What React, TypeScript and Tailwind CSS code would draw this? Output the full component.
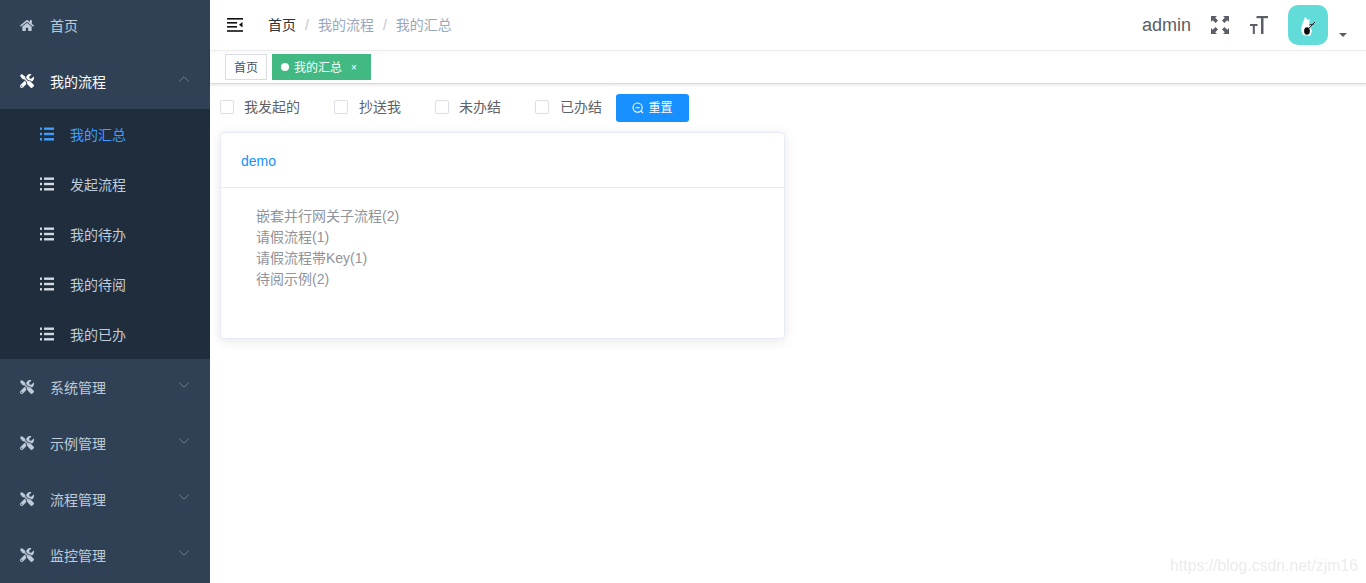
import React from "react";
import { FaHome, FaTools } from "react-icons/fa";
import { FiChevronDown, FiChevronUp } from "react-icons/fi";

const font = { fontFamily: '"Liberation Sans", "Noto Sans CJK SC", sans-serif' };

function ListIcon({ color }: { color: string }) {
  return (
    <svg width="14" height="14" viewBox="0 0 14 14" fill={color}>
      <rect x="0" y="0.5" width="2" height="2.4" />
      <rect x="4" y="0.5" width="10" height="2.4" />
      <rect x="0" y="5.8" width="2" height="2.4" />
      <rect x="4" y="5.8" width="10" height="2.4" />
      <rect x="0" y="11.1" width="2" height="2.4" />
      <rect x="4" y="11.1" width="10" height="2.4" />
    </svg>
  );
}

function TopItem({ label, open, active, home }: { label: string; open?: boolean; active?: boolean; home?: boolean }) {
  const Chevron = open ? FiChevronUp : FiChevronDown;
  return (
    <div className={`h-14 shrink-0 flex items-center pl-5 pr-[17px] text-sm ${active ? "text-white" : "text-[#bfcbd9]"}`}>
      <span className="w-[14px] flex justify-center">
        {home ? <FaHome size={15} /> : <FaTools size={14} />}
      </span>
      <span className="ml-4 pt-[2px]">{label}</span>
      {!home && <Chevron size={18} strokeWidth={1.3} className="ml-auto mb-1 text-[#75808d]" />}
    </div>
  );
}

function SubItem({ label, active }: { label: string; active?: boolean }) {
  return (
    <div className={`h-[50px] flex items-center pl-10 text-sm ${active ? "text-[#409eff]" : "text-[#bfcbd9]"}`}>
      <ListIcon color={active ? "#409eff" : "#d3dae3"} />
      <span className="ml-4 pt-[2px]">{label}</span>
    </div>
  );
}

function Sidebar() {
  return (
    <aside className="w-[210px] shrink-0 h-full bg-[#304156] overflow-hidden">
      <div className="-mt-[3px]">
        <TopItem label="首页" home />
        <TopItem label="我的流程" open active />
        <div className="bg-[#1f2d3d]">
          <SubItem label="我的汇总" active />
          <SubItem label="发起流程" />
          <SubItem label="我的待办" />
          <SubItem label="我的待阅" />
          <SubItem label="我的已办" />
        </div>
        <TopItem label="系统管理" />
        <TopItem label="示例管理" />
        <TopItem label="流程管理" />
        <TopItem label="监控管理" />
      </div>
    </aside>
  );
}

function Hamburger() {
  return (
    <svg width="16" height="14" viewBox="0 0 16 14" fill="#111">
      <rect x="0" y="0" width="16" height="1.6" />
      <rect x="0" y="4" width="10" height="1.6" />
      <rect x="0" y="8" width="10" height="1.6" />
      <rect x="0" y="12.2" width="16" height="1.6" />
      <path d="M15.5 4 L12 6.8 L15.5 9.6 Z" />
    </svg>
  );
}

function FullScreen() {
  return (
    <svg width="18" height="18" viewBox="0 0 18 18" fill="#5a5e66">
      <path d="M0 0h6L4.2 1.8 7 4.6 4.6 7 1.8 4.2 0 6z" />
      <path d="M18 0h-6l1.8 1.8L11 4.6 13.4 7l2.8-2.8L18 6z" />
      <path d="M0 18h6l-1.8-1.8L7 13.4 4.6 11l-2.8 2.8L0 12z" />
      <path d="M18 18h-6l1.8-1.8L11 13.4l2.4-2.4 2.8 2.8L18 12z" />
    </svg>
  );
}

function SizeIcon() {
  return (
    <svg width="18" height="18" viewBox="0 0 18 18" fill="#5a5e66">
      <rect x="6.5" y="0" width="11.5" height="2.2" />
      <rect x="11" y="0" width="2.5" height="18" />
      <rect x="0" y="8" width="7.5" height="2" />
      <rect x="2.8" y="8" width="2" height="10" />
    </svg>
  );
}

function Avatar() {
  return (
    <div className="w-10 h-10 rounded-[10px] bg-[#62dcd8] flex">
      <svg width="40" height="40" viewBox="0 0 40 40">
        <path d="M17 12 L20 15 L22 14 L21 18 L23 20 L22 22 L24 26 L22 31 L15 30 L13 25 L14 20 Z" fill="#fff" />
        <ellipse cx="19" cy="26" rx="2.9" ry="3.8" fill="#0b0b0b" />
        <path d="M21 20 L26 19" stroke="#222" strokeWidth="0.9" />
        <path d="M21 23 L27 17" stroke="#222" strokeWidth="1" />
      </svg>
    </div>
  );
}

function Navbar() {
  return (
    <header className="h-[51px] shrink-0 flex items-center border-b border-[#f2f2f2] shadow-[0_1px_4px_rgba(0,21,41,0.04)]">
      <div className="ml-[17px] flex"><Hamburger /></div>
      <nav className="ml-[25px] flex items-center text-sm text-[#97a8be]">
        <span className="text-[#303133]">首页</span>
        <span className="mx-[9px] text-[#c0c4cc]">/</span>
        <span>我的流程</span>
        <span className="mx-[9px] text-[#c0c4cc]">/</span>
        <span>我的汇总</span>
      </nav>
      <div className="ml-auto flex items-center">
        <span className="text-[18px] text-[#5a5e66]">admin</span>
        <span className="ml-5 flex"><FullScreen /></span>
        <span className="ml-[21px] flex"><SizeIcon /></span>
        <span className="ml-[20px] flex"><Avatar /></span>
        <span className="ml-[11px] mr-[19px] mt-[19px] w-0 h-0 border-x-[4px] border-x-transparent border-t-[4px] border-t-[#5a5e66]" />
      </div>
    </header>
  );
}

function TagsBar() {
  return (
    <div className="h-[33px] shrink-0 flex items-center pl-[15px] gap-[5px] border-b border-[#d8dce5] shadow-[0_1px_3px_0_rgba(0,0,0,0.12)]">
      <span className="h-[26px] w-[42px] flex items-center justify-center border border-[#d8dce5] text-xs text-[#495060] bg-white pt-[1px]">首页</span>
      <span className="h-[26px] w-[99px] flex items-center pl-[9px] text-xs text-white bg-[#42b983]">
        <span className="w-2 h-2 rounded-full bg-white mr-[5px]" />
        <span className="pt-[2px]">我的汇总</span>
        <span className="ml-[9px] text-[10px] pt-[2px]">×</span>
      </span>
    </div>
  );
}

function Check({ label, className, gap }: { label: string; className?: string; gap: string }) {
  return (
    <label className={`flex items-center text-sm text-[#606266] ${className ?? ""}`}>
      <span className="w-[14px] h-[14px] rounded-[2px] border border-[#dcdfe6] bg-white" />
      <span className={gap}>{label}</span>
    </label>
  );
}

function FilterRow() {
  return (
    <div className="h-[28px] mt-[10px] flex items-center pl-[10px]">
      <Check label="我发起的" gap="ml-[10px]" className="-mt-[2px]" />
      <Check label="抄送我" gap="ml-[11px]" className="ml-[34px] -mt-[2px]" />
      <Check label="未办结" gap="ml-[10px]" className="ml-[34px] -mt-[2px]" />
      <Check label="已办结" gap="ml-[11px]" className="ml-[34px] -mt-[2px]" />
      <button className="ml-[14px] w-[73px] h-7 rounded-[3px] bg-[#1890ff] text-white text-xs flex items-center justify-center">
        <svg width="12" height="12" viewBox="0 0 12 12" fill="none" stroke="#fff" strokeWidth="1.1" className="mr-[4px]">
          <circle cx="5.6" cy="5.6" r="4.6" />
          <path d="M3.6 5.8h4M9 9l2 2" />
        </svg>
        重置
      </button>
    </div>
  );
}

function Card() {
  const items = ["嵌套并行网关子流程(2)", "请假流程(1)", "请假流程帯Key(1)", "待阅示例(2)"];
  return (
    <div className="ml-[10px] mt-[10px] w-[565px] h-[207px] rounded-[4px] border border-[#e6ebf5] bg-white shadow-[0_2px_12px_0_rgba(0,0,0,0.1)]">
      <div className="h-[55px] border-b border-[#e6ebf5] flex items-center pl-5 pt-[2px] text-sm text-[#1890ff]">demo</div>
      <ul className="pt-[18px] pl-[35px] text-sm leading-[21px] text-[#909399]">
        {items.map((t) => <li key={t}>{t}</li>)}
      </ul>
    </div>
  );
}

export default function App() {
  return (
    <div className="relative w-[1366px] h-[583px] overflow-hidden flex bg-white" style={font}>
      <Sidebar />
      <main className="flex-1 flex flex-col min-w-0">
        <Navbar />
        <TagsBar />
        <FilterRow />
        <Card />
      </main>
      <span className="absolute right-[8px] bottom-[5px] text-[15.8px] text-[#ebebeb] blur-[0.5px]">https://blog.csdn.net/zjm16</span>
    </div>
  );
}
